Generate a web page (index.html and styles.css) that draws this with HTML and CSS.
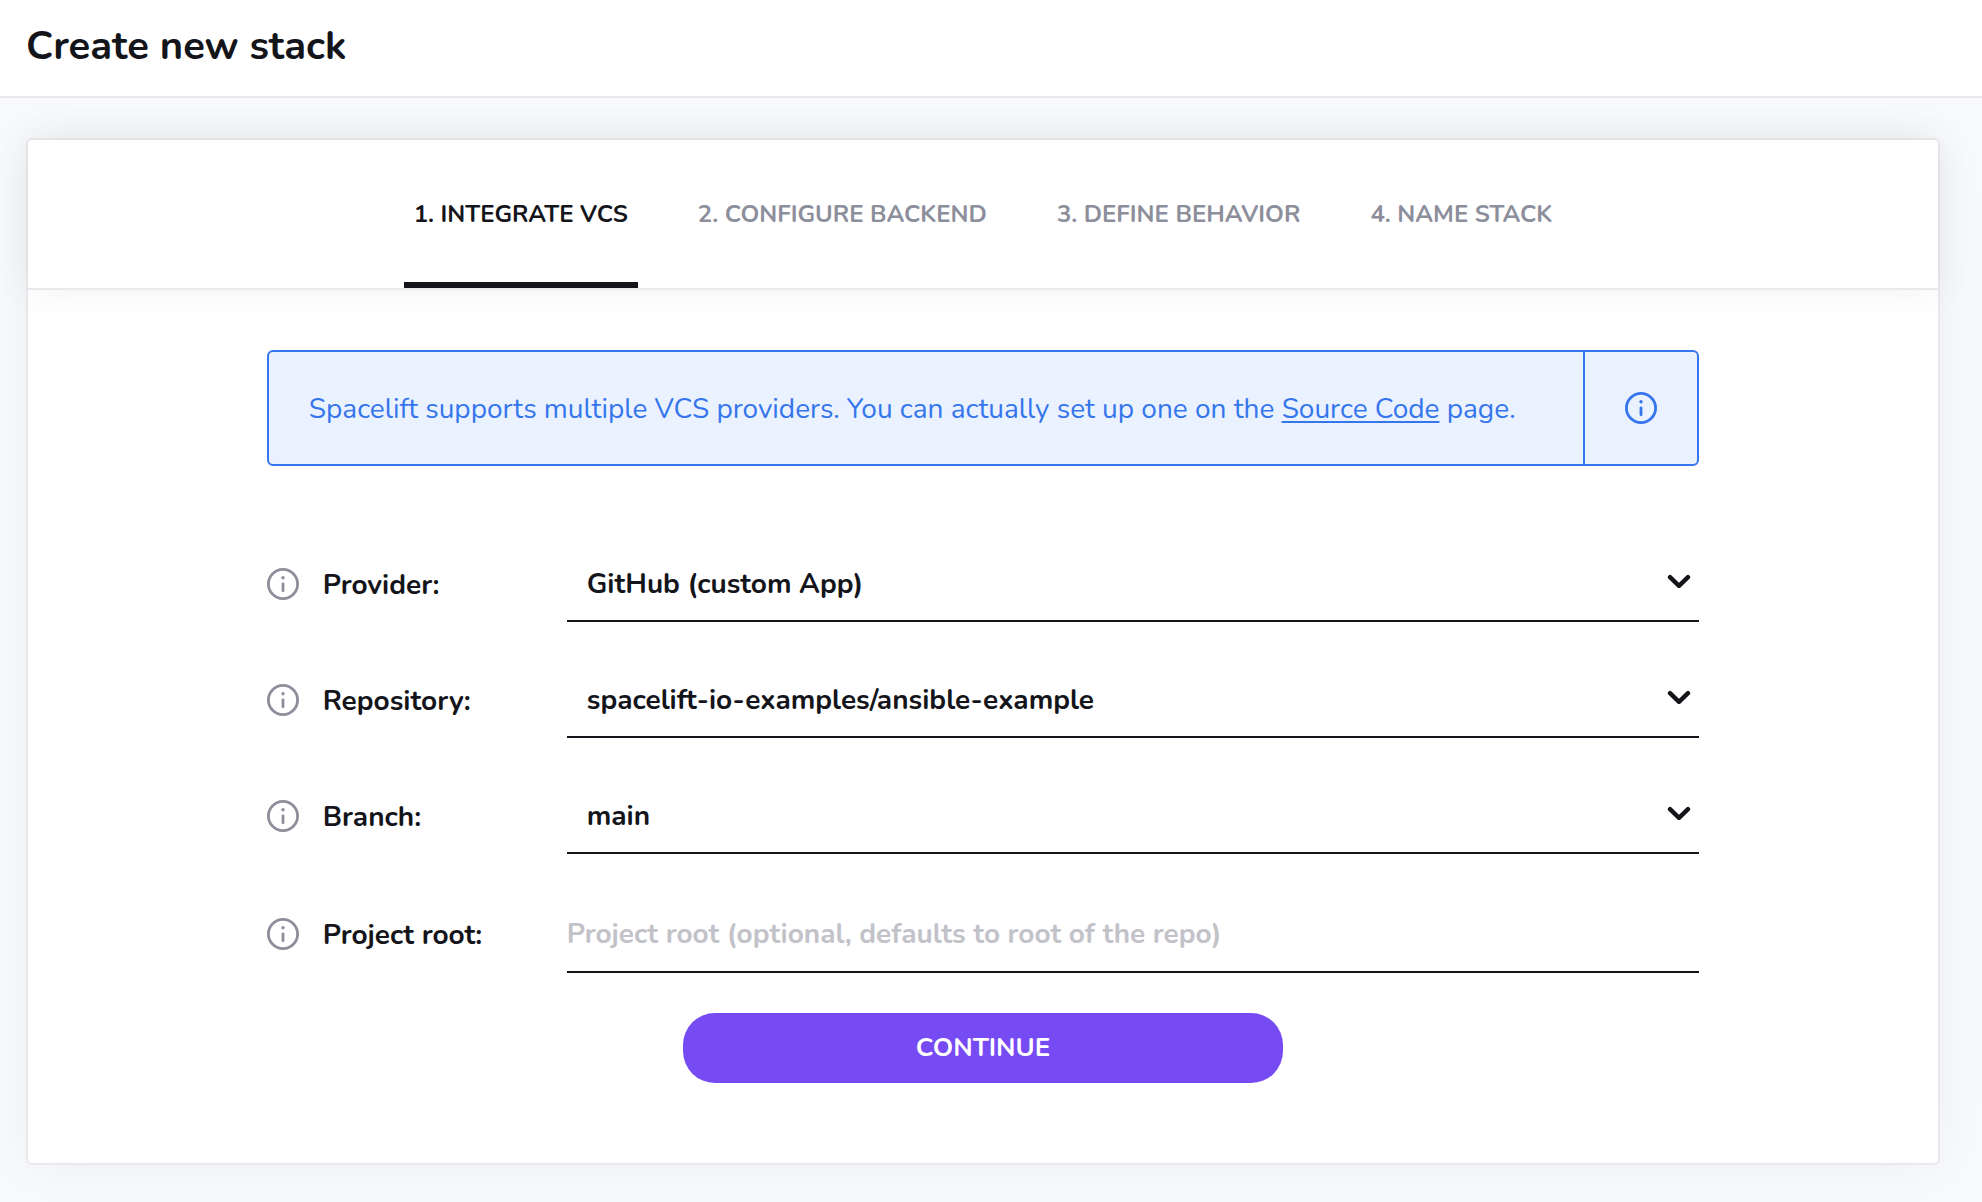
FILE: index.html
```
<!DOCTYPE html>
<html lang="en">
<head>
    <meta charset="UTF-8">
    <meta name="viewport" content="width=device-width, initial-scale=1.0">
    <title>Create new stack</title>
    <link rel="stylesheet" href="styles.css">
</head>
<body>
    <!-- Shared icons -->
    <svg class="sprite" aria-hidden="true">
        <symbol id="icon-info" viewBox="0 0 32 32">
            <circle cx="16" cy="16" r="14.6" fill="none" stroke="currentColor" stroke-width="2.8"/>
            <circle cx="16" cy="9.8" r="1.7" fill="currentColor"/>
            <path d="M16 15.8v7" fill="none" stroke="currentColor" stroke-width="2.8" stroke-linecap="round"/>
        </symbol>
        <symbol id="icon-chevron" viewBox="0 0 24 16">
            <path d="M3 3.2l9 8.6 9-8.6" fill="none" stroke="currentColor" stroke-width="4.4" stroke-linecap="round" stroke-linejoin="round"/>
        </symbol>
    </svg>

    <header class="page-header">
        <h1 class="title">Create new stack</h1>
    </header>

    <main class="page-content">
        <div class="card">
            <nav class="tabs">
                <button type="button" class="tab active">1. INTEGRATE VCS</button>
                <button type="button" class="tab">2. CONFIGURE BACKEND</button>
                <button type="button" class="tab">3. DEFINE BEHAVIOR</button>
                <button type="button" class="tab">4. NAME STACK</button>
            </nav>

            <form class="stack-form">
                <div class="notice">
                    <p class="notice-text">Spacelift supports multiple VCS providers. You can actually set up one on the <a href="#">Source Code</a> page.</p>
                    <div class="notice-icon">
                        <svg class="icon-info"><use href="#icon-info"/></svg>
                    </div>
                </div>

                <div class="form-row">
                    <svg class="icon-info"><use href="#icon-info"/></svg>
                    <label for="provider">Provider:</label>
                    <div class="select-wrap">
                        <select id="provider" class="field">
                            <option>GitHub (custom App)</option>
                        </select>
                        <svg class="chevron"><use href="#icon-chevron"/></svg>
                    </div>
                </div>

                <div class="form-row">
                    <svg class="icon-info"><use href="#icon-info"/></svg>
                    <label for="repository">Repository:</label>
                    <div class="select-wrap">
                        <select id="repository" class="field">
                            <option>spacelift-io-examples/ansible-example</option>
                        </select>
                        <svg class="chevron"><use href="#icon-chevron"/></svg>
                    </div>
                </div>

                <div class="form-row">
                    <svg class="icon-info"><use href="#icon-info"/></svg>
                    <label for="branch">Branch:</label>
                    <div class="select-wrap">
                        <select id="branch" class="field">
                            <option>main</option>
                        </select>
                        <svg class="chevron"><use href="#icon-chevron"/></svg>
                    </div>
                </div>

                <div class="form-row">
                    <svg class="icon-info"><use href="#icon-info"/></svg>
                    <label for="root">Project root:</label>
                    <input type="text" id="root" class="field" placeholder="Project root (optional, defaults to root of the repo)">
                </div>

                <button type="submit" class="continue-btn">CONTINUE</button>
            </form>
        </div>
    </main>
</body>
</html>
```

FILE: styles.css
```
* {
    margin: 0;
    padding: 0;
    box-sizing: border-box;
}

body {
    font-family: 'Nunito', 'Lato', sans-serif;
    font-size: 28px;
    line-height: 36px;
    color: #13151b;
    background: #f9fafc;
    min-height: 100vh;
}

button,
select,
input {
    font: inherit;
    color: inherit;
    background: none;
    border: none;
    border-radius: 0;
}

.sprite {
    display: none;
}

.page-header {
    position: relative;
    background: white;
    padding: 18px 26px 22px;
    border-bottom: 2px solid #e8e8ed;
}

.title {
    font-size: 40px;
    line-height: 56px;
    font-weight: bold;
}

.page-content {
    padding: 40px 42px 36px 26px;
}

.card {
    background: white;
    border: 2px solid #e8e8ed;
    border-radius: 6px;
    box-shadow: 0 0 60px rgba(19, 21, 40, 0.05);
}

/* Steps */
.tabs {
    display: flex;
    justify-content: center;
    gap: 50px;
    height: 150px;
    border-bottom: 2px solid #e8e8ed;
    border-radius: 4px 4px 0 0;
    box-shadow: 0 0 40px rgba(19, 21, 40, 0.06);
}

.tab {
    padding: 6px 10px 0;
    border-bottom: 6px solid transparent;
    font-size: 24px;
    font-weight: bold;
    color: #8d8e9b;
    cursor: pointer;
}

.tab.active {
    color: #13151b;
    border-bottom-color: #13151b;
}

.stack-form {
    display: flex;
    flex-direction: column;
    gap: 40px;
    width: 75%;
    margin: 0 auto;
    padding: 60px 0 80px;
}

/* Notice */
.notice {
    display: flex;
    margin-bottom: 40px;
    color: #3576ec;
    background: #eaf1ff;
    border: 2px solid #3576ec;
    border-radius: 6px;
}

.notice-text {
    flex: 1;
    padding: 39px 40px 37px;
}

.notice-text a {
    color: inherit;
    text-underline-offset: 3px;
    text-decoration-thickness: 2px;
}

.notice-icon {
    display: flex;
    align-items: center;
    justify-content: center;
    width: 114px;
    border-left: 2px solid #3576ec;
}

.icon-info {
    width: 32px;
    height: 32px;
}

/* Form rows */
.form-row {
    display: grid;
    grid-template-columns: 32px 220px 1fr;
    column-gap: 24px;
    align-items: center;
    font-weight: bold;
}

.form-row .icon-info {
    color: #8d8e9b;
}

.form-row label {
    padding-top: 2px;
}

.select-wrap {
    position: relative;
}

.field {
    display: block;
    width: 100%;
    height: 76px;
    padding-top: 2px;
    border-bottom: 2px solid #13151b;
    outline: none;
}

input.field {
    height: 79px;
}

select.field {
    appearance: none;
    padding: 2px 60px 0 20px;
    cursor: pointer;
}

.field::placeholder {
    color: #c2c2c9;
    opacity: 1;
}

.chevron {
    position: absolute;
    right: 8px;
    top: 28px;
    width: 24px;
    height: 16px;
    pointer-events: none;
}

.continue-btn {
    align-self: center;
    width: 100%;
    max-width: 600px;
    height: 70px;
    border-radius: 32px;
    font-size: 26px;
    font-weight: bold;
    color: white;
    background: #774bf4;
    cursor: pointer;
}

@media (max-width: 1100px) {
    .stack-form {
        width: 90%;
    }

    .tabs {
        gap: 10px;
    }

    .tab {
        font-size: 18px;
    }
}
```
